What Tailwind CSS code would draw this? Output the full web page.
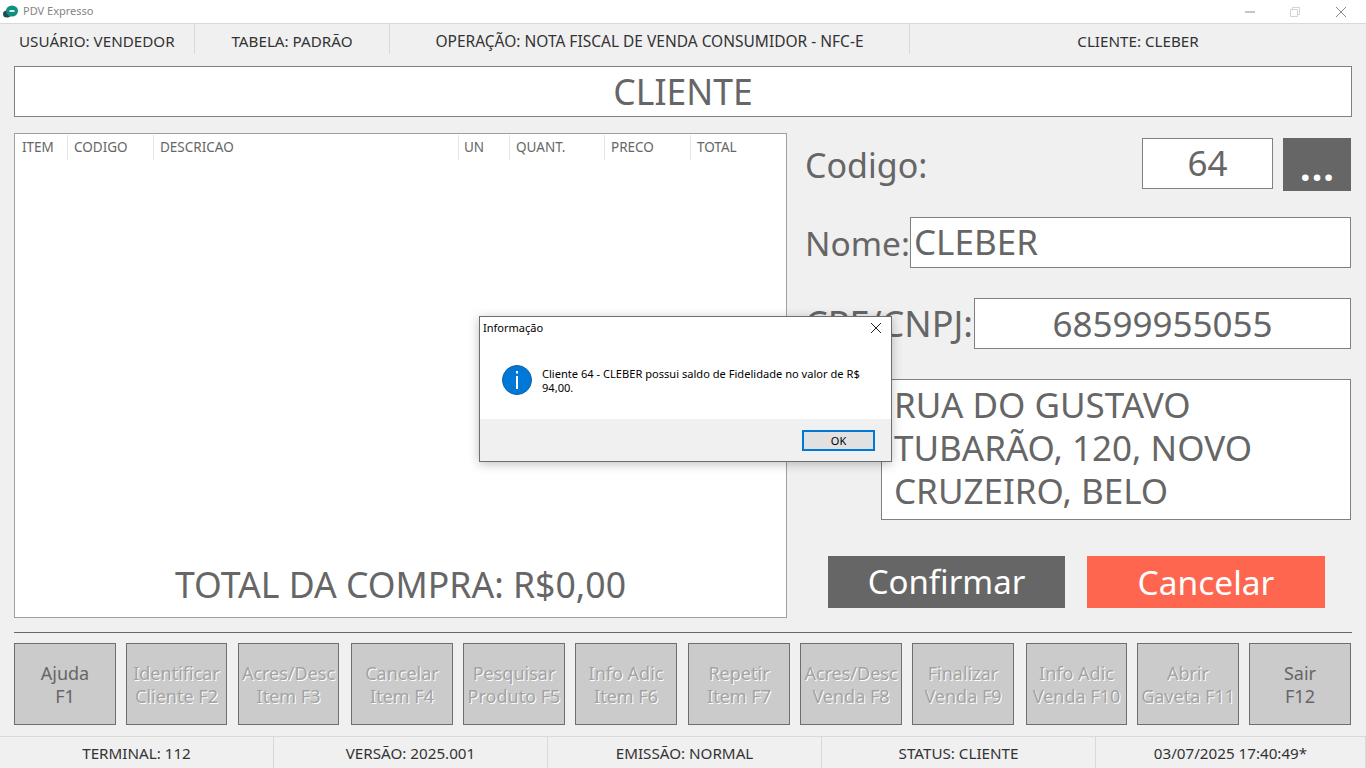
<!DOCTYPE html>
<html lang="pt-BR">
<head>
<meta charset="utf-8">
<title>PDV Expresso</title>
<script src="https://cdn.jsdelivr.net/npm/@tailwindcss/browser@4"></script>
</head>
<body class="relative w-[1366px] h-[768px] overflow-hidden bg-[#f0f0f1] font-['Noto_Sans','Open_Sans',sans-serif] text-[#666666]">

  <!-- Barra de titulo -->
  <div class="h-[24px] bg-white border-b border-[#d9d9d9] flex items-center">
    <svg class="ml-[3px] w-[15px] h-[13px]" viewBox="0 0 15 13">
      <ellipse cx="4" cy="9" rx="4" ry="3.5" fill="#1f4a4f"/>
      <ellipse cx="9" cy="6" rx="6" ry="5.5" fill="#0f8f80"/>
      <rect x="6.5" y="5" width="5" height="2" fill="#d7f0ea"/>
    </svg>
    <span class="ml-[5px] text-[11px] text-[#858585]">PDV Expresso</span>
    <div class="ml-auto mr-[2px] flex items-center">
      <svg class="w-[46px] h-[20px]" viewBox="0 0 46 20"><path d="M19 10h10" stroke="#8a8a8a"/></svg>
      <svg class="w-[46px] h-[20px]" viewBox="0 0 46 20" fill="none" stroke="#d4d4d4"><path d="M18.5 7.5h7v7h-7zM20.5 7.5v-2h7v7h-2"/></svg>
      <svg class="w-[46px] h-[20px]" viewBox="0 0 46 20" fill="none" stroke="#8a8a8a"><path d="M18 5l10 10M28 5l-10 10"/></svg>
    </div>
  </div>

  <!-- Barra superior -->
  <div class="h-[30px] flex items-center text-[15.2px] text-[#333333]">
    <div class="w-[195px] h-[30px] border-r border-[#d9d9d9] pl-[19px] leading-[34px]">USUÁRIO: VENDEDOR</div>
    <div class="w-[195px] h-[30px] border-r border-[#d9d9d9] text-center leading-[34px]">TABELA: PADRÃO</div>
    <div class="w-[520px] h-[30px] border-r border-[#d9d9d9] text-center text-[15.5px] leading-[34px]">OPERAÇÃO: NOTA FISCAL DE VENDA CONSUMIDOR - NFC-E</div>
    <div class="flex-1 h-[30px] text-center leading-[34px]">CLIENTE: CLEBER</div>
  </div>

  <div class="px-[14px]">
    <div class="mt-[12px] h-[51px] w-[1338px] bg-white border border-[#808080] text-center text-[35.5px] leading-[49px]">CLIENTE</div>

    <div class="mt-[16px] flex">
      <!-- Grade de itens -->
      <div class="w-[773px] h-[485px] shrink-0 bg-white border border-[#a0a0a0] flex flex-col">
        <div class="flex h-[25px] mt-px text-[13.5px] leading-[24px]">
          <div class="w-[53px] border-r border-[#e5e5e5] pl-[7px]">ITEM</div>
          <div class="w-[86px] border-r border-[#e5e5e5] pl-[6px]">CODIGO</div>
          <div class="w-[305px] border-r border-[#e5e5e5] pl-[6px]">DESCRICAO</div>
          <div class="w-[51px] border-r border-[#e5e5e5] pl-[5px]">UN</div>
          <div class="w-[95px] border-r border-[#e5e5e5] pl-[6px]">QUANT.</div>
          <div class="w-[86px] border-r border-[#e5e5e5] pl-[6px]">PRECO</div>
          <div class="flex-1 pl-[6px]">TOTAL</div>
        </div>
        <div class="mt-auto mb-[9px] pl-[160px] text-[35.6px] leading-[48px]">TOTAL DA COMPRA: R$0,00</div>
      </div>

      <!-- Painel do cliente -->
      <div class="ml-[18px] w-[547px] shrink-0 flex flex-col text-[35px]">
        <div class="mt-[5px] flex items-start">
          <span class="text-[34px] leading-[54px]">Codigo:</span>
          <div class="ml-auto w-[131px] h-[51px] bg-white border border-[#808080] text-center leading-[47px]">64</div>
          <div class="ml-[10px] mr-px w-[68px] h-[53px] bg-[#666666] text-white text-center text-[42px] font-semibold leading-[54px]">...</div>
        </div>
        <div class="mt-[25px] flex items-center h-[51px]">
          <span class="pt-[2px] text-[33.5px]">Nome:</span>
          <div class="ml-auto w-[441px] mr-px h-[51px] bg-white border border-[#808080] pl-[3px] leading-[47px]">CLEBER</div>
        </div>
        <div class="mt-[30px] flex items-center h-[51px]">
          <span class="text-[36px]">CPF/CNPJ:</span>
          <div class="ml-auto mr-px w-[377px] h-[51px] bg-white border border-[#808080] text-center leading-[49px]">68599955055</div>
        </div>
        <div class="mt-[30px] ml-[76px] mr-px h-[141px] bg-white border border-[#808080] pl-[12px] pt-[3px] leading-[43px] overflow-hidden">RUA DO GUSTAVO TUBARÃO, 120, NOVO CRUZEIRO, BELO</div>
        <div class="mt-[36px] ml-[23px] flex gap-[22px]">
          <div class="w-[237px] h-[52px] bg-[#666666] text-white text-center text-[33px] leading-[52px]">Confirmar</div>
          <div class="w-[238px] h-[52px] bg-[#ff6650] text-white text-center text-[33.5px] leading-[52px]">Cancelar</div>
        </div>
      </div>
    </div>

    <div class="mt-[14px] h-px w-[1338px] bg-[#666666]"></div>

    <!-- Teclas de funcao -->
    <div class="mt-[10px] flex text-[18px] leading-[23px] text-center">
      <div class="w-[102px] h-[82px] pt-px bg-[#cbcbcb] border border-[#6e6e6e] flex items-center justify-center">Ajuda<br>F1</div>
      <div class="ml-[10px] w-[101px] h-[82px] pt-px bg-[#cbcbcb] border border-[#6e6e6e] flex items-center justify-center text-[#a3a3a3] [text-shadow:1px_1px_0_#ffffff] whitespace-nowrap">Identificar<br>Cliente F2</div>
      <div class="ml-[11px] w-[101px] h-[82px] pt-px bg-[#cbcbcb] border border-[#6e6e6e] flex items-center justify-center text-[#a3a3a3] [text-shadow:1px_1px_0_#ffffff] whitespace-nowrap">Acres/Desc<br>Item F3</div>
      <div class="ml-[12px] w-[102px] h-[82px] pt-px bg-[#cbcbcb] border border-[#6e6e6e] flex items-center justify-center text-[#a3a3a3] [text-shadow:1px_1px_0_#ffffff] whitespace-nowrap">Cancelar<br>Item F4</div>
      <div class="ml-[10px] w-[102px] h-[82px] pt-px bg-[#cbcbcb] border border-[#6e6e6e] flex items-center justify-center text-[#a3a3a3] [text-shadow:1px_1px_0_#ffffff] whitespace-nowrap">Pesquisar<br>Produto F5</div>
      <div class="ml-[10px] w-[102px] h-[82px] pt-px bg-[#cbcbcb] border border-[#6e6e6e] flex items-center justify-center text-[#a3a3a3] [text-shadow:1px_1px_0_#ffffff] whitespace-nowrap">Info Adic<br>Item F6</div>
      <div class="ml-[11px] w-[102px] h-[82px] pt-px bg-[#cbcbcb] border border-[#6e6e6e] flex items-center justify-center text-[#a3a3a3] [text-shadow:1px_1px_0_#ffffff] whitespace-nowrap">Repetir<br>Item F7</div>
      <div class="ml-[10px] w-[102px] h-[82px] pt-px bg-[#cbcbcb] border border-[#6e6e6e] flex items-center justify-center text-[#a3a3a3] [text-shadow:1px_1px_0_#ffffff] whitespace-nowrap">Acres/Desc<br>Venda F8</div>
      <div class="ml-[10px] w-[102px] h-[82px] pt-px bg-[#cbcbcb] border border-[#6e6e6e] flex items-center justify-center text-[#a3a3a3] [text-shadow:1px_1px_0_#ffffff] whitespace-nowrap">Finalizar<br>Venda F9</div>
      <div class="ml-[12px] w-[101px] h-[82px] pt-px bg-[#cbcbcb] border border-[#6e6e6e] flex items-center justify-center text-[#a3a3a3] [text-shadow:1px_1px_0_#ffffff] whitespace-nowrap">Info Adic<br>Venda F10</div>
      <div class="ml-[10px] w-[102px] h-[82px] pt-px bg-[#cbcbcb] border border-[#6e6e6e] flex items-center justify-center text-[#a3a3a3] [text-shadow:1px_1px_0_#ffffff] whitespace-nowrap">Abrir<br>Gaveta F11</div>
      <div class="ml-[10px] w-[102px] h-[82px] pt-px bg-[#cbcbcb] border border-[#6e6e6e] flex items-center justify-center">Sair<br>F12</div>
    </div>
  </div>

  <!-- Barra de status -->
  <div class="mt-[11px] h-[32px] border-t border-[#d9d9d9] flex text-[15.2px] text-[#333333] leading-[32px] text-center">
    <div class="w-[274px] border-r border-[#d9d9d9]">TERMINAL: 112</div>
    <div class="w-[274px] border-r border-[#d9d9d9]">VERSÃO: 2025.001</div>
    <div class="w-[274px] border-r border-[#d9d9d9]">EMISSÃO: NORMAL</div>
    <div class="w-[274px] border-r border-[#d9d9d9]">STATUS: CLIENTE</div>
    <div class="w-[270px] border-r border-[#d9d9d9]">03/07/2025 17:40:49*</div>
  </div>

  <!-- Dialogo de informacao -->
  <div class="absolute left-[479px] top-[316px] w-[413px] h-[146px] bg-white border border-[#6e6e6e] shadow-[0_2px_10px_rgba(0,0,0,0.25)] flex flex-col text-black">
    <div class="h-[22px] flex items-center pl-[3px] text-[11px]">
      Informação
      <svg class="ml-auto mr-[9px] w-[12px] h-[12px]" viewBox="0 0 12 12" fill="none" stroke="#222222"><path d="M1 1l10 10M11 1L1 11"/></svg>
    </div>
    <div class="flex-1 flex pl-[22px] pt-[26px]">
      <svg class="w-[30px] h-[30px] shrink-0" viewBox="0 0 30 30">
        <circle cx="15" cy="15" r="14.5" fill="#0078d7" stroke="#0f62a8"/>
        <rect x="14" y="11" width="2" height="13" fill="#ffffff"/>
        <rect x="14" y="6" width="2" height="2.5" fill="#ffffff"/>
      </svg>
      <p class="ml-[10px] w-[330px] pt-[2px] text-[11.1px] leading-[14px]">Cliente 64 - CLEBER possui saldo de Fidelidade no valor de R$ 94,00.</p>
    </div>
    <div class="h-[42px] bg-[#f0f0f0] flex items-center justify-end pr-[16px]">
      <div class="w-[73px] h-[21px] bg-[#e1e1e1] border-2 border-[#0078d7] text-center text-[11px] leading-[17px]">OK</div>
    </div>
  </div>
</body>
</html>
